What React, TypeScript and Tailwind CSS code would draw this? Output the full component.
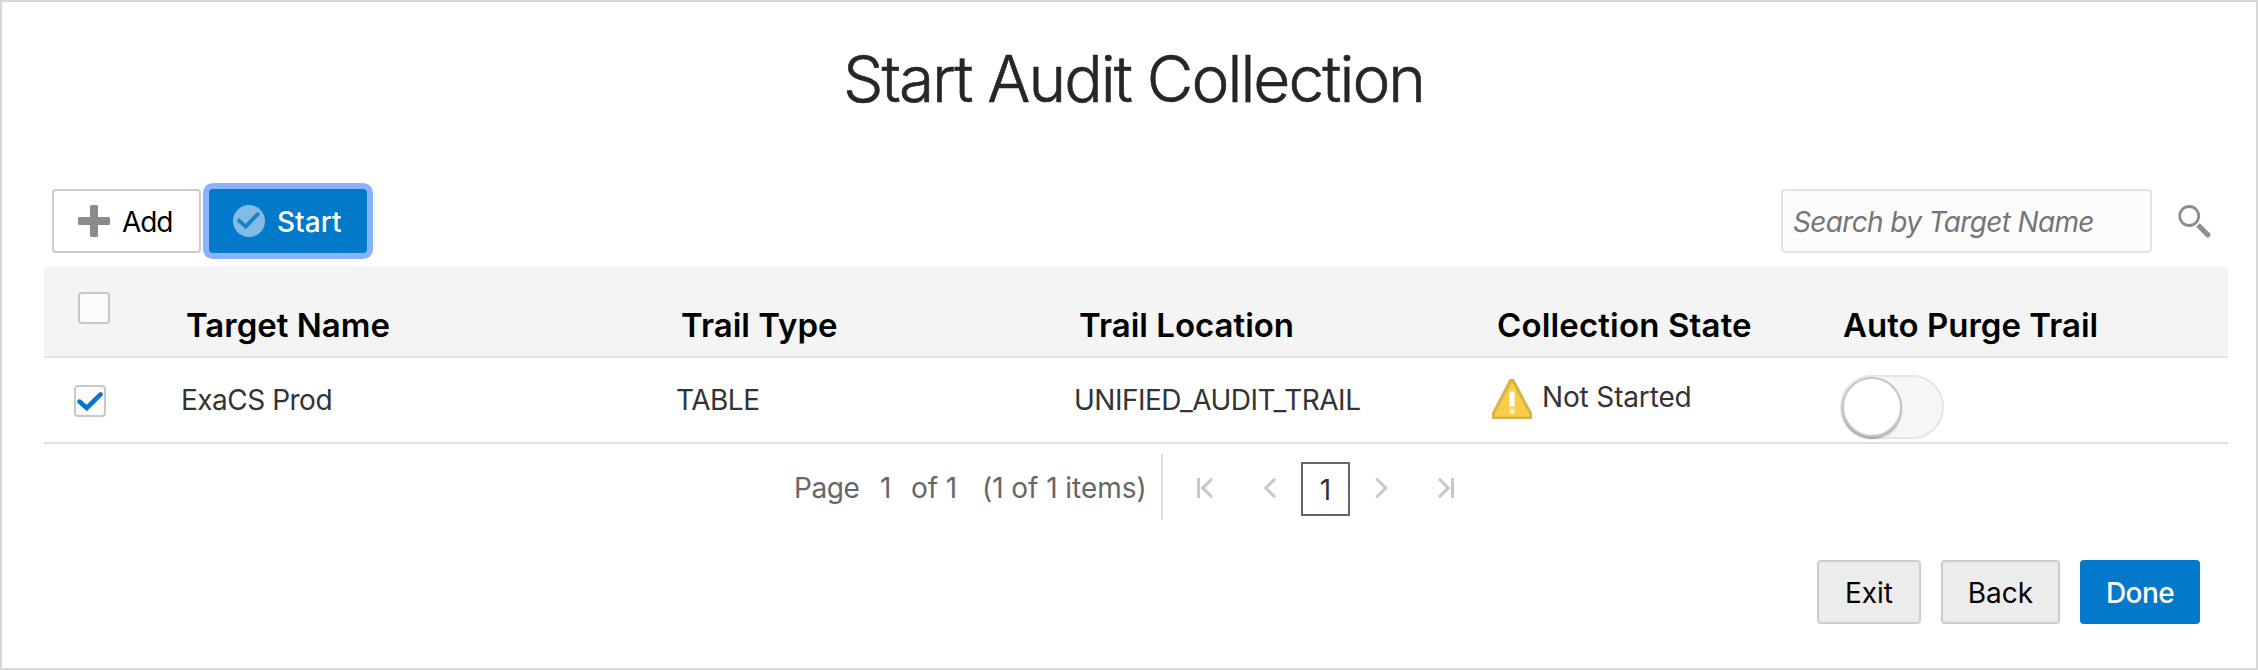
import React from "react";

function Checkbox({ checked }: { checked?: boolean }) {
  return (
    <span className="flex size-8 items-center justify-center rounded-[4px] border-2 border-[#c8c8c8] bg-[#fcfcfc]">
      {checked && (
        <svg viewBox="0 0 28 28" className="size-7 shrink-0" fill="none" stroke="#0279ca" strokeWidth="4.6">
          <path d="M3.4 14.6 L10.7 21 L24.6 7.4" strokeLinejoin="miter" strokeLinecap="round" />
        </svg>
      )}
    </span>
  );
}

function PlusIcon() {
  return (
    <svg viewBox="0 0 32 32" className="size-8" fill="#888c8f">
      <rect x="12" y="0" width="8" height="32" rx="1.5" />
      <rect x="0" y="12" width="32" height="8" rx="1.5" />
    </svg>
  );
}

function StartIcon() {
  return (
    <svg viewBox="0 0 32 32" className="size-8">
      <circle cx="16" cy="16" r="16" fill="#84bbe6" />
      <path d="M6 15.6 L12.7 21.6 L24.8 9.2" fill="none" stroke="#1a80cb" strokeWidth="3.8" strokeLinecap="round" />
    </svg>
  );
}

function SearchIcon() {
  return (
    <svg viewBox="0 0 33 33" className="size-[33px]" fill="none" stroke="#8c8e90">
      <circle cx="11.2" cy="11" r="9.5" strokeWidth="2.8" />
      <path d="M20 20 L29.5 29.5" strokeWidth="5.2" />
      <circle cx="29.8" cy="29.8" r="1.2" strokeWidth="2.8" />
    </svg>
  );
}

function WarningIcon() {
  return (
    <svg viewBox="0 0 40 40" className="size-10">
      <path d="M17.5 0 H22 L40 34 V40 H0 V34 Z" fill="#d9b144" />
      <path d="M19.8 3 L37.6 35.5 V37.5 H2.4 V35.5 Z" fill="#fbce4a" />
      <rect x="17.5" y="12.5" width="5" height="15" fill="#fff" />
      <rect x="17.5" y="30" width="5" height="5" fill="#fff3cf" />
    </svg>
  );
}

const cols = "grid grid-cols-[137px_495px_398px_416px_350px_1fr]";

export default function App() {
  return (
    <div className="flex h-[670px] w-[2258px] flex-col border-2 border-[#d8d8d8] bg-white font-['Inter',sans-serif] text-[28px] leading-none text-[#333]">
      <h1 className="mt-[45px] h-16 pl-[9px] text-center text-[64px] font-[340] leading-[64px] tracking-[-1.97px] text-[#262626] [-webkit-text-stroke:0.6px_#262626]">
        Start Audit Collection
      </h1>

      <div className="mt-[78px] flex h-16 pl-[50px] text-black">
        <button className="flex h-16 w-[149px] items-center gap-3 rounded-[4px] border-2 border-[#ccc] bg-white pl-6">
          <PlusIcon />
          <span className="pt-0.5 tracking-[-1.1px]">Add</span>
        </button>
        <button className="ml-2 flex h-16 w-[158px] items-center gap-3 rounded-[4px] bg-[#0279ca] pl-6 text-white ring-6 ring-[#8ab3ff]">
          <StartIcon />
          <span className="pt-0.5 font-[450]">Start</span>
        </button>
        <input
          placeholder="Search by Target Name"
          className="ml-auto h-16 w-[371px] rounded-[4px] border-2 border-[#e4e4e4] bg-[#fcfcfc] pt-0.5 pl-[10px] tracking-[-0.65px] italic placeholder:text-[#757575]"
        />
        <div className="mr-[45px] ml-[26px] pt-4">
          <SearchIcon />
        </div>
      </div>

      <div className="mt-[13px] mr-[28px] ml-[42px]">
        <div className={`${cols} h-[92px] border-b-2 border-[#e2e2e2] bg-[#f4f4f4] text-[33px] font-semibold leading-[32px] text-black`}>
          <div className="pt-[26px] pl-[34px]">
            <Checkbox />
          </div>
          <div className="pt-[43px] pl-[5px]">Target Name</div>
          <div className="pt-[43px] pl-[5px]">Trail Type</div>
          <div className="pt-[43px] pl-[5px]">Trail Location</div>
          <div className="pt-[43px] pl-[7px] tracking-[0.15px]">Collection State</div>
          <div className="pt-[43px] pl-[3px]">Auto Purge Trail</div>
        </div>
        <div className={`${cols} h-[86px] border-b-2 border-[#e0e0e0]`}>
          <div className="pt-[27px] pl-[30px]">
            <Checkbox checked />
          </div>
          <div className="pt-[28px] tracking-[-0.5px]">ExaCS Prod</div>
          <div className="pt-[28px] tracking-[-0.5px]">TABLE</div>
          <div className="pt-[28px] tracking-[-0.5px]">UNIFIED_AUDIT_TRAIL</div>
          <div className="flex gap-[10px] pt-[21px] pl-[2px]">
            <WarningIcon />
            <span className="pt-1 tracking-[-0.15px]">Not Started</span>
          </div>
          <div className="pt-[17px]">
            <div className="h-16 w-[104px] rounded-full border-2 border-[#e4e6e7] bg-[#f7f7f7]">
              <div className="h-[60px] w-[60px] rounded-full border-2 border-[#c4c6c7] bg-white shadow-[0_2px_2px_rgba(0,0,0,0.3)]" />
            </div>
          </div>
        </div>
      </div>

      <div className="mt-[10px] flex h-[66px] pl-[792px] text-[#666]">
        <div className="flex w-[369px] border-r-2 border-[#ddd] pt-[20px] whitespace-nowrap">
          <span className="w-[86px] tracking-[-0.4px]">Page</span>
          <span className="w-[31px]">1</span>
          <span className="w-[71px] tracking-[-0.1px]">of 1</span>
          <span className="tracking-[-0.05px]">(1 of 1 items)</span>
        </div>
        <svg viewBox="0 0 16 22" className="mt-[23px] ml-[34px] h-[22px] w-4" fill="none" stroke="#c8c8c8" strokeWidth="3">
          <path d="M1.5 1 V21 M15 1.8 L5.8 11 L15 20.2" />
        </svg>
        <svg viewBox="0 0 13 22" className="mt-[23px] ml-[50px] h-[22px] w-[13px]" fill="none" stroke="#c8c8c8" strokeWidth="3">
          <path d="M12 1.8 L2.8 11 L12 20.2" />
        </svg>
        <div className="mt-2 ml-[25px] flex h-[54px] w-[49px] items-center justify-center border-2 border-[#666] pt-0.5 text-[#333]">1</div>
        <svg viewBox="0 0 13 22" className="mt-[23px] ml-[25px] h-[22px] w-[13px]" fill="none" stroke="#c8c8c8" strokeWidth="3">
          <path d="M1.5 1.8 L10.7 11 L1.5 20.2" />
        </svg>
        <svg viewBox="0 0 16 22" className="mt-[23px] ml-[50px] h-[22px] w-4" fill="none" stroke="#c8c8c8" strokeWidth="3">
          <path d="M14.5 1 V21 M1 1.8 L10.2 11 L1 20.2" />
        </svg>
      </div>

      <div className="mt-10 mr-[56px] flex justify-end gap-5 text-black">
        <button className="h-16 w-[104px] rounded-[4px] border-2 border-[#ccc] bg-[#ececec] pt-0.5">Exit</button>
        <button className="h-16 w-[119px] rounded-[4px] border-2 border-[#ccc] bg-[#ececec] pt-0.5">Back</button>
        <button className="h-16 w-[120px] rounded-[4px] bg-[#0279ca] pt-0.5 font-[450] tracking-[-0.6px] text-white">Done</button>
      </div>
    </div>
  );
}
